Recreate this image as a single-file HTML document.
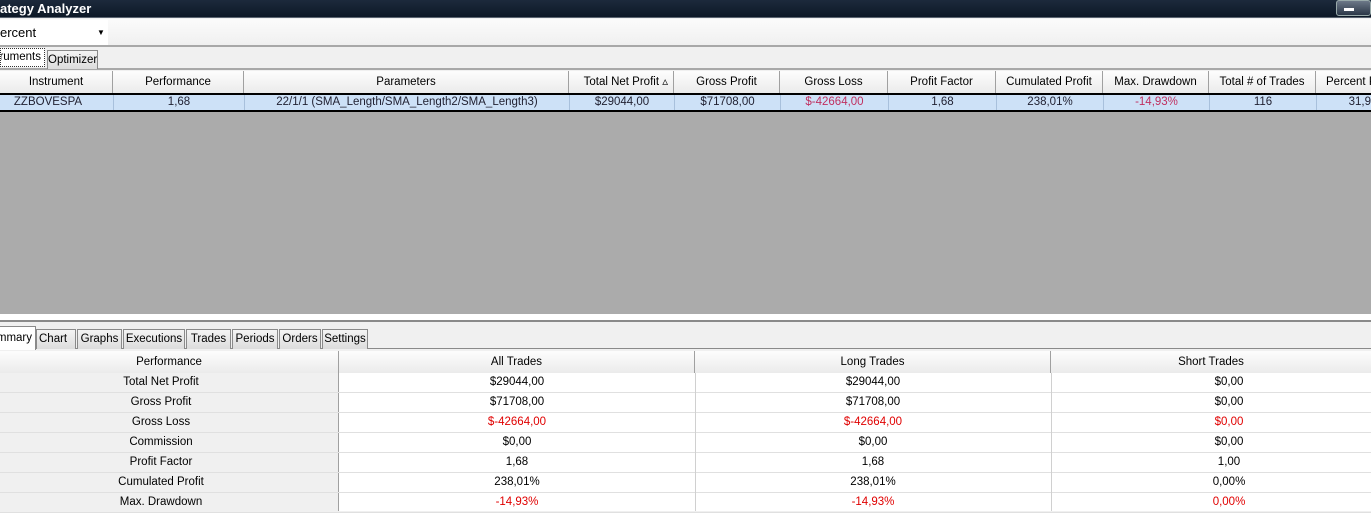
<!DOCTYPE html><html><head><style>
*{margin:0;padding:0;box-sizing:border-box}
body{width:1371px;height:511px;overflow:hidden;background:#f0f0f0;font-family:"Liberation Sans",sans-serif;font-size:11.5px;color:#000;position:relative}
.a{position:absolute}
.title{left:0;top:0;width:1371px;height:18px;background:linear-gradient(#1c2a3c,#0d1826);color:#fff;font-weight:bold;font-size:13px;line-height:18px;border-bottom:1px solid #5a6470}
.c{position:absolute;text-align:center;white-space:nowrap;overflow:hidden}
.hd{background:linear-gradient(#fdfdfd,#ebebeb);border-right:1px solid #a0a0a0;height:22px;line-height:22px}
.tab{position:absolute;border:1px solid #8a8a8a;border-bottom:none;background:linear-gradient(#f4f4f4,#dcdcdc);height:20px;line-height:19px;text-align:center;white-space:nowrap;overflow:hidden}
.red{color:#e00000}
.pk{color:#c03060}
</style></head><body>
<div class="a title">ategy Analyzer</div>
<div class="a" style="left:1336px;top:0;width:35px;height:16px;border:1px solid #9aa;border-radius:3px;background:linear-gradient(#6c7888,#2c3848)"></div>
<div class="a" style="left:1344px;top:8px;width:10px;height:3px;background:#fff"></div>
<div class="a" style="left:0;top:19px;width:1371px;height:28px;background:linear-gradient(#fbfbfb,#f0f0f0);border-bottom:2px solid #a8a8a8"></div>
<div class="a" style="left:0;top:20px;width:108px;height:25px;background:#fff;font-size:13px;line-height:25px">ercent<span style="position:absolute;left:97px;top:0;font-size:8px">▼</span></div>
<div class="a" style="left:0;top:47px;width:1371px;height:23px;background:#f0f0f0;border-bottom:2px solid #a8a8a8"></div>
<div class="tab" style="left:0;top:48px;width:45px;background:#fff;height:19px;border:1px dotted #333;line-height:17px;text-align:right;padding-right:3px;direction:rtl">Instruments</div>
<div class="tab" style="left:47px;top:50px;width:51px;height:19px;line-height:18px">Optimizer</div>
<div class="a" style="left:0;top:71px;width:1371px;height:22px;background:linear-gradient(#fdfdfd,#ebebeb);border-bottom:1px solid #a0a0a0"></div>
<div class="c hd" style="left:0;top:71px;width:113px">Instrument</div>
<div class="c hd" style="left:113px;top:71px;width:131px">Performance</div>
<div class="c hd" style="left:244px;top:71px;width:325px">Parameters</div>
<div class="c hd" style="left:569px;top:71px;width:105px;text-align:right;padding-right:5px">Total Net Profit ▵</div>
<div class="c hd" style="left:674px;top:71px;width:106px">Gross Profit</div>
<div class="c hd" style="left:780px;top:71px;width:108px">Gross Loss</div>
<div class="c hd" style="left:888px;top:71px;width:108px">Profit Factor</div>
<div class="c hd" style="left:996px;top:71px;width:107px">Cumulated Profit</div>
<div class="c hd" style="left:1103px;top:71px;width:106px">Max. Drawdown</div>
<div class="c hd" style="left:1209px;top:71px;width:107px">Total # of Trades</div>
<div class="c hd" style="left:1316px;top:71px;width:70px;text-align:left;padding-left:10px">Percent P</div>
<div class="a" style="left:0;top:93px;width:1371px;height:19px;background:#cde1f7;border-top:2px solid #000;border-bottom:2px solid #000"></div>
<div class="a" style="left:0;top:95px;width:1371px;height:15px;line-height:15px;color:#223">
<div class="c" style="left:0;width:96px">ZZBOVESPA</div>
<div class="c" style="left:113px;width:131px;border-left:1px solid #a8c0dc">1,68</div>
<div class="c" style="left:244px;width:325px;border-left:1px solid #a8c0dc">22/1/1 (SMA_Length/SMA_Length2/SMA_Length3)</div>
<div class="c" style="left:569px;width:105px;border-left:1px solid #a8c0dc">$29044,00</div>
<div class="c" style="left:674px;width:106px;border-left:1px solid #a8c0dc">$71708,00</div>
<div class="c pk" style="left:780px;width:108px;border-left:1px solid #a8c0dc">$-42664,00</div>
<div class="c" style="left:888px;width:108px;border-left:1px solid #a8c0dc">1,68</div>
<div class="c" style="left:996px;width:107px;border-left:1px solid #a8c0dc">238,01%</div>
<div class="c pk" style="left:1103px;width:106px;border-left:1px solid #a8c0dc">-14,93%</div>
<div class="c" style="left:1209px;width:107px;border-left:1px solid #a8c0dc">116</div>
<div class="c" style="left:1316px;width:55px;border-left:1px solid #a8c0dc;text-align:right">31,9</div>
</div>
<div class="a" style="left:0;top:112px;width:1371px;height:202px;background:#ababab"></div>
<div class="a" style="left:0;top:314px;width:1371px;height:6px;background:#fff"></div>
<div class="a" style="left:0;top:320px;width:1371px;height:2px;background:#8a8a8a"></div>
<div class="a" style="left:0;top:322px;width:1371px;height:27px;background:#f0f0f0;border-bottom:1px solid #8a8a8a"></div>
<div class="tab" style="left:0;top:326px;width:36px;background:#fff;height:24px;z-index:2;line-height:22px;border-left:none;direction:rtl;text-align:right;padding-right:3px">Summary</div>
<div class="tab" style="left:36px;top:329px;width:40px;text-align:left;padding-left:2px">Chart</div>
<div class="tab" style="left:77px;top:329px;width:45px">Graphs</div>
<div class="tab" style="left:123px;top:329px;width:62px">Executions</div>
<div class="tab" style="left:186px;top:329px;width:45px">Trades</div>
<div class="tab" style="left:232px;top:329px;width:46px">Periods</div>
<div class="tab" style="left:279px;top:329px;width:42px">Orders</div>
<div class="tab" style="left:322px;top:329px;width:46px">Settings</div>
<div class="a" style="left:0;top:351px;width:1371px;height:160px;background:#fff"></div>
<div class="a" style="left:0;top:351px;width:1371px;height:22px;background:linear-gradient(#fbfbfb,#ececec);border-bottom:1px solid #a0a0a0"></div>
<div class="c hd" style="left:0;top:351px;width:339px">Performance</div>
<div class="c hd" style="left:339px;top:351px;width:356px">All Trades</div>
<div class="c hd" style="left:695px;top:351px;width:356px">Long Trades</div>
<div class="c hd" style="left:1051px;top:351px;width:320px;border-right:none">Short Trades</div>
<div class="a" style="left:0;top:373px;width:339px;height:138px;background:#f0f0f0;border-right:1px solid #a0a0a0"></div>
<div id="rows"></div>
<script>
var r=[["Total Net Profit","$29044,00","$29044,00","$0,00",0],["Gross Profit","$71708,00","$71708,00","$0,00",0],["Gross Loss","$-42664,00","$-42664,00","$0,00",1],["Commission","$0,00","$0,00","$0,00",0],["Profit Factor","1,68","1,68","1,00",0],["Cumulated Profit","238,01%","238,01%","0,00%",0],["Max. Drawdown","-14,93%","-14,93%","0,00%",1]];
var h="";r.forEach(function(x,i){var t=373+i*20;var cl=x[4]?' red':'';
h+='<div class="a" style="left:0;top:'+(t+19)+'px;width:1371px;height:1px;background:#e0e0e0"></div>';
h+='<div class="c" style="left:0;top:'+t+'px;width:322px;line-height:19px">'+x[0]+'</div>';
h+='<div class="c'+cl+'" style="left:339px;top:'+t+'px;width:356px;line-height:19px">'+x[1]+'</div>';
h+='<div class="c'+cl+'" style="left:695px;top:'+t+'px;width:356px;line-height:19px">'+x[2]+'</div>';
h+='<div class="c'+cl+'" style="left:1051px;top:'+t+'px;width:356px;line-height:19px">'+x[3]+'</div>';});
h+='<div class="a" style="left:695px;top:373px;width:1px;height:138px;background:#d0d0d0"></div><div class="a" style="left:1051px;top:373px;width:1px;height:138px;background:#d0d0d0"></div>';
document.getElementById("rows").innerHTML=h;
</script>
</body></html>
